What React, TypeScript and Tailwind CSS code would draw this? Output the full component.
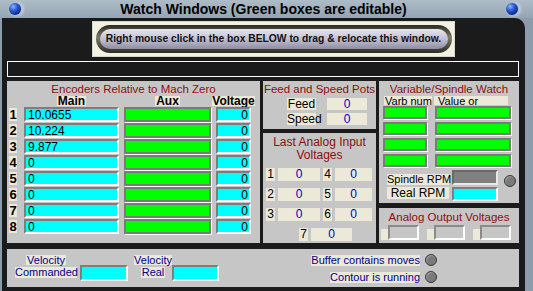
import React from "react"

const sans = "font-['Liberation_Sans',Arial,sans-serif]"
const red = "text-[#8b0f0f]"
const sunken = "border-2 border-t-[#7e7e7e] border-l-[#7e7e7e] border-r-white border-b-white"
const greenBox = "bg-[#00ff00] border-2 border-[#7a7a7a] shadow-[1px_1px_0_#ffffff]"

function Orb() {
  return (
    <div className="w-[14px] h-[14px] rounded-full bg-[#a9b7c3] flex items-center justify-center shadow-[2px_0_3px_#c8d2da]">
      <div className="w-[12px] h-[12px] rounded-full bg-[radial-gradient(circle_at_35%_30%,#8fb4ff_0%,#2a5bd8_35%,#0a2a8a_75%,#061a55_100%)]" />
    </div>
  )
}

function Led() {
  return (
    <div className="w-[12px] h-[12px] rounded-full bg-[#7a7a7a] border border-[#3a3a3a] shadow-[inset_1px_1px_1px_#a0a0a0]" />
  )
}

function Cream({ children, className = "" }: { children?: React.ReactNode; className?: string }) {
  return <div className={`bg-[#ece9d8] ${className}`}>{children}</div>
}

const encoderRows = [
  { n: "1", main: "10.0655" },
  { n: "2", main: "10.224" },
  { n: "3", main: "9.877" },
  { n: "4", main: "0" },
  { n: "5", main: "0" },
  { n: "6", main: "0" },
  { n: "7", main: "0" },
  { n: "8", main: "0" },
]

function EncodersPanel() {
  return (
    <div className="w-[253px] h-[162px] bg-[#c6c6c6] flex flex-col">
      <div className={`mt-[2px] h-[13px] text-center text-[11.5px] leading-[13px] ${red}`}>Encoders Relative to Mach Zero</div>
      <div className="flex h-[11px] font-bold text-[12px] leading-[11px] text-black">
        <div className="ml-[2px] w-[8px]" />
        <div className="ml-[7px] w-[95px] flex justify-center">
          <Cream className="px-[1px] h-[10px]">Main</Cream>
        </div>
        <div className="ml-[5px] w-[87px] flex justify-center">
          <Cream className="px-[1px] h-[10px]">Aux</Cream>
        </div>
        <div className="ml-[3px] w-[39px] flex justify-center">
          <Cream className="h-[10px]">Voltage</Cream>
        </div>
      </div>
      <div className="flex flex-col">
        {encoderRows.map((r) => (
          <div key={r.n} className="flex h-[16px] items-start">
            <Cream className="ml-[2px] mt-[1px] w-[8px] h-[13px] text-center font-bold text-[13px] leading-[13px] text-black">
              {r.n}
            </Cream>
            <div className={`ml-[7px] w-[95px] h-[15px] bg-[#00ffff] ${sunken} text-[12px] leading-[12px] pl-[2px] text-black`}>
              {r.main}
            </div>
            <div className={`ml-[5px] w-[87px] h-[15px] ${greenBox}`} />
            <div className={`ml-[5px] w-[35px] h-[15px] bg-[#00ffff] ${sunken} text-[12px] leading-[12px] text-right pr-[1px] text-black`}>
              0
            </div>
          </div>
        ))}
      </div>
    </div>
  )
}

function FeedPanel() {
  return (
    <div className="h-[48px] bg-[#c6c6c6] flex flex-col text-[11.5px]">
      <div className={`mt-[2px] h-[14px] text-center leading-[13px] ${red}`}>Feed and Speed Pots</div>
      {["Feed", "Speed"].map((l, i) => (
        <div key={l} className={`flex ${i === 0 ? "mt-[1px]" : "mt-[3px]"} h-[12px] text-[12px] leading-[12px]`}>
          <Cream className="ml-[24px] w-[29px] text-center text-black">{l}</Cream>
          <Cream className="ml-[11px] w-[40px] text-center text-[#0000c8]">0</Cream>
        </div>
      ))}
    </div>
  )
}

function AnalogInPanel() {
  const rows = [
    ["1", "4"],
    ["2", "5"],
    ["3", "6"],
  ]
  return (
    <div className="h-[110px] bg-[#c6c6c6] flex flex-col text-[12px] leading-[13px]">
      <div className={`mt-[3px] text-center ${red}`}>Last Analog Input</div>
      <div className={`text-center ${red}`}>Voltages</div>
      <div className="mt-[6px] flex flex-col gap-[7px]">
        {rows.map(([a, b]) => (
          <div key={a} className="flex h-[13px]">
            <Cream className="ml-[3px] w-[9px] text-center text-black">{a}</Cream>
            <Cream className="ml-[3px] w-[42px] text-center text-[#0000c8]">0</Cream>
            <Cream className="ml-[3px] w-[9px] text-center text-black">{b}</Cream>
            <Cream className="ml-[3px] w-[37px] text-center text-[#0000c8]">0</Cream>
          </div>
        ))}
        <div className="flex h-[13px]">
          <Cream className="ml-[36px] w-[9px] text-center text-black">7</Cream>
          <Cream className="ml-[3px] w-[41px] text-center text-[#0000c8]">0</Cream>
        </div>
      </div>
    </div>
  )
}

function VarPanel() {
  return (
    <div className="h-[122px] bg-[#c6c6c6] flex flex-col text-[11.5px] leading-[13px]">
      <div className={`mt-[2px] h-[13px] text-center ${red}`}>Variable/Spindle Watch</div>
      <div className="flex h-[10px] leading-[10px] text-[11px] text-black">
        <Cream className="ml-[5px] w-[48px] h-[9px] pl-[1px]">Varb num</Cream>
        <Cream className="ml-[2px] w-[74px] h-[9px] pl-[4px]">Value or</Cream>
      </div>
      <div className="flex flex-col gap-[3px]">
        {[0, 1, 2, 3].map((i) => (
          <div key={i} className="flex h-[13px]">
            <div className={`ml-[4px] w-[44px] h-[13px] ${greenBox}`} />
            <div className={`ml-[8px] w-[76px] h-[13px] ${greenBox}`} />
          </div>
        ))}
      </div>
      <div className="mt-[3px] flex items-end h-[15px]">
        <Cream className="ml-[8px] w-[62px] h-[11px] leading-[11px] text-[11px] whitespace-nowrap text-center text-black">Spindle RPM</Cream>
        <div className="ml-[3px] w-[46px] h-[15px] bg-[#808080] border-2 border-t-[#6a6a6a] border-l-[#6a6a6a] border-r-[#e8e8e8] border-b-[#e8e8e8]" />
        <div className="ml-[6px] mb-[-2px]">
          <Led />
        </div>
      </div>
      <div className="mt-[2px] flex items-start h-[14px]">
        <Cream className="ml-[8px] w-[62px] h-[12px] leading-[12px] text-[12px] whitespace-nowrap text-center text-black">Real RPM</Cream>
        <div className={`ml-[3px] w-[46px] h-[14px] bg-[#00ffff] ${sunken}`} />
      </div>
    </div>
  )
}

function AnalogOutPanel() {
  return (
    <div className="h-[35px] bg-[#c6c6c6] flex flex-col text-[11.5px] leading-[13px]">
      <div className={`mt-[3px] h-[13px] text-center ${red}`}>Analog Output Voltages</div>
      <div className="mt-[1px] flex">
        {[0, 1, 2].map((i) => (
          <div key={i} className={`flex items-end ${i === 0 ? "ml-[2px]" : "ml-[8px]"}`}>
            <Cream className="w-[7px] h-[11px]" />
            <div className="w-[31px] h-[15px] bg-[#c6c6c6] border-2 border-t-[#8a8a8a] border-l-[#8a8a8a] border-r-white border-b-white" />
          </div>
        ))}
      </div>
    </div>
  )
}

function BottomPanel() {
  return (
    <div className="h-[38px] bg-[#c6c6c6] flex items-start text-[11px] leading-[11px] text-[#00008b]">
      <div className="ml-[8px] mt-[6px] w-[62px] flex flex-col items-center">
        <Cream className="h-[10px] px-[1px]">Velocity</Cream>
        <Cream className="mt-[2px] h-[11px] w-[62px] text-center">Commanded</Cream>
      </div>
      <div className={`ml-[3px] mt-[16px] w-[48px] h-[16px] bg-[#00ffff] ${sunken}`} />
      <div className="ml-[6px] mt-[6px] w-[38px] flex flex-col items-center">
        <Cream className="h-[10px] w-[38px] text-center">Velocity</Cream>
        <Cream className="mt-[2px] h-[11px] px-[1px]">Real</Cream>
      </div>
      <div className={`mt-[16px] w-[47px] h-[16px] bg-[#00ffff] ${sunken}`} />
      <div className="ml-auto mr-[82px] mt-[5px] flex flex-col items-end gap-[5px]">
        <div className="flex items-center gap-[5px]">
          <Cream className="h-[11px]">Buffer contains moves</Cream>
          <Led />
        </div>
        <div className="flex items-center gap-[5px]">
          <Cream className="h-[11px]">Contour is running</Cream>
          <Led />
        </div>
      </div>
    </div>
  )
}

export default function App() {
  return (
    <div className={`w-[533px] h-[291px] overflow-hidden bg-[#8d9caa] flex flex-col ${sans}`}>
      <div className="h-[18px] flex items-center bg-[linear-gradient(#aebcc8,#94a4b2)] pl-[8px] pr-[14px]">
        <Orb />
        <div className="flex-1 text-center font-bold text-[14px] leading-[16px] text-black">
          Watch Windows (Green boxes are editable)
        </div>
        <Orb />
      </div>
      <div className="ml-[2px] mr-[8px] flex-1 bg-[#1b1b1b] rounded-tr-[10px] px-[5px] flex flex-col">
        <div className="mt-[3px] ml-[85px] w-[363px] h-[36px] bg-[#f3f2e2] border border-[#d8d8c8] flex items-center justify-center">
          <div className="w-[356px] h-[28px] rounded-full bg-[linear-gradient(#2a2a20,#7c7b68_45%,#2c2c22)] p-[4px]">
            <div className="w-full h-full rounded-full bg-[linear-gradient(#e6e5ef,#c2c0d2_50%,#8f8da3)] flex items-center justify-center font-bold text-[10.3px] whitespace-nowrap text-[#111]">
              Right mouse click in the box BELOW to drag &amp; relocate this window.
            </div>
          </div>
        </div>
        <div className="mt-[4px] w-[512px] h-[16px] border border-white bg-[#1b1b1b]" />
        <div className="mt-[4px] flex gap-[3px]">
          <EncodersPanel />
          <div className="w-[113px] flex flex-col gap-[4px]">
            <FeedPanel />
            <AnalogInPanel />
          </div>
          <div className="w-[140px] flex flex-col gap-[5px]">
            <VarPanel />
            <AnalogOutPanel />
          </div>
        </div>
        <div className="mt-[6px] w-[512px]">
          <BottomPanel />
        </div>
      </div>
    </div>
  )
}
